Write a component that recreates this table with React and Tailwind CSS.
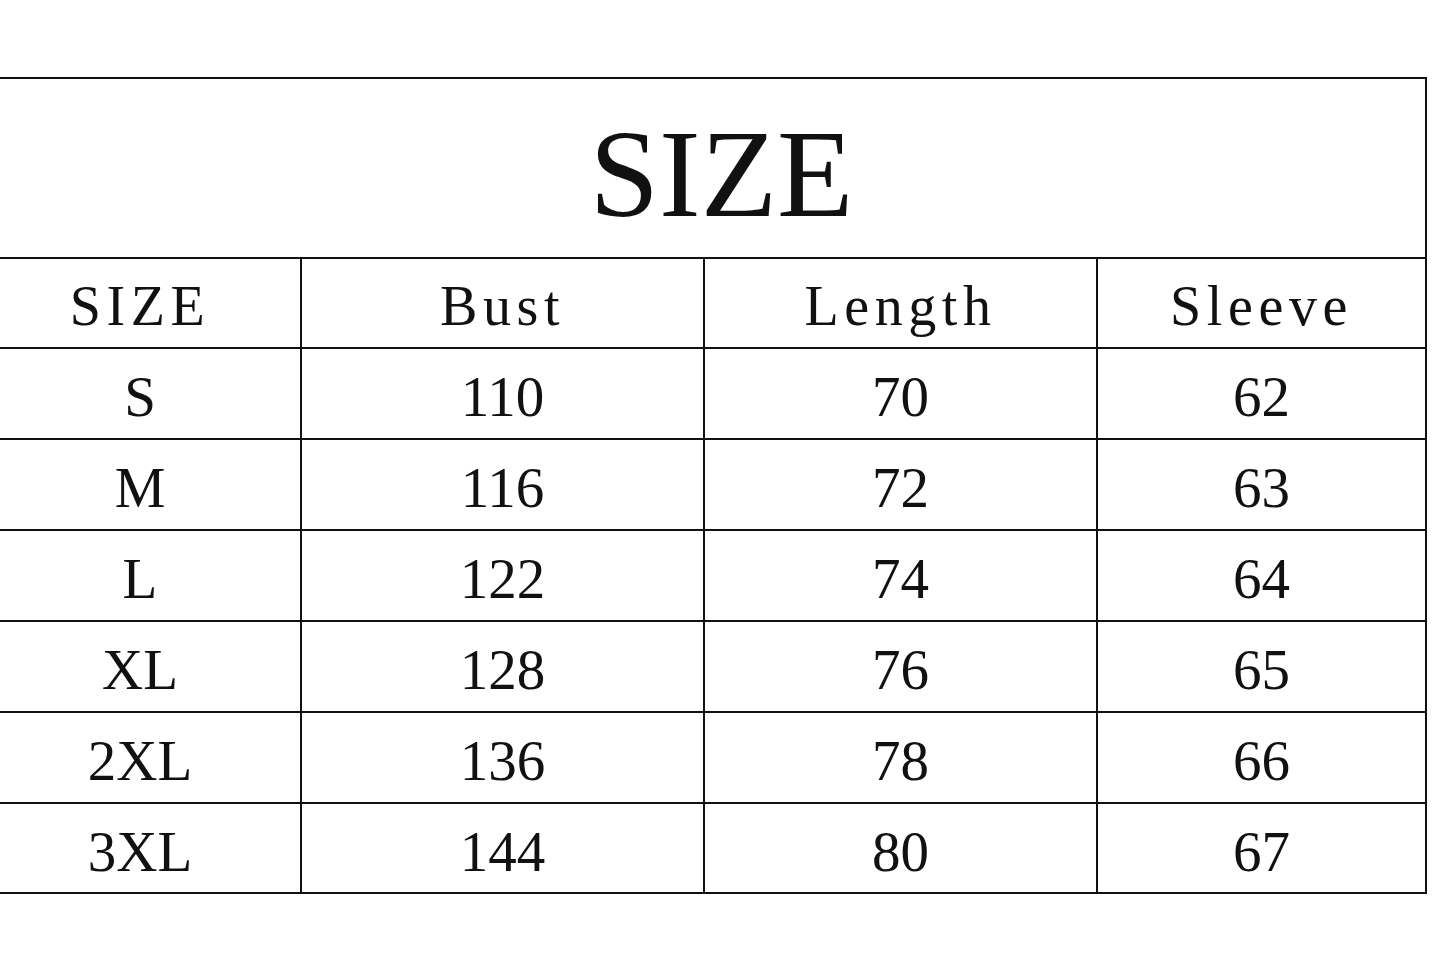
const rows = [
  ["S", "110", "70", "62"],
  ["M", "116", "72", "63"],
  ["L", "122", "74", "64"],
  ["XL", "128", "76", "65"],
  ["2XL", "136", "78", "66"],
  ["3XL", "144", "80", "67"],
];

const headers = ["SIZE", "Bust", "Length", "Sleeve"];

const serif = { fontFamily: '"Liberation Serif", "Times New Roman", serif' };

export default function App() {
  return (
    <div className="w-[1445px] h-[963px] bg-white overflow-hidden text-[#111]" style={serif}>
      <div className="mt-[77px] -ml-[22px] w-[1449px] border-2 border-[#111]">
        {/* Title */}
        <div className="h-[178px] flex items-center justify-center pl-[38px] pt-[12px]">
          <span className="text-[125px] leading-none">SIZE</span>
        </div>

        {/* Header row */}
        <div className="grid grid-cols-[320px_403px_393px_1fr] h-[90px] border-t-2 border-[#111]">
          {headers.map((h, i) => (
            <div
              key={h}
              className={
                "flex items-center justify-center pt-[6px] text-[56px] leading-none tracking-[0.1em] " +
                (i > 0 ? "border-l-2 border-[#111]" : "")
              }
            >
              {h}
            </div>
          ))}
        </div>

        {/* Data rows */}
        {rows.map((r, ri) => (
          <div
            key={r[0]}
            className={
              "grid grid-cols-[320px_403px_393px_1fr] border-t-2 border-[#111] " +
              (ri === rows.length - 1 ? "h-[90px]" : "h-[91px]")
            }
          >
            {r.map((v, i) => (
              <div
                key={i}
                className={
                  "flex items-center justify-center pt-[6px] text-[57px] leading-none " +
                  (i > 0 ? "border-l-2 border-[#111]" : "")
                }
              >
                {v}
              </div>
            ))}
          </div>
        ))}
      </div>
    </div>
  );
}
